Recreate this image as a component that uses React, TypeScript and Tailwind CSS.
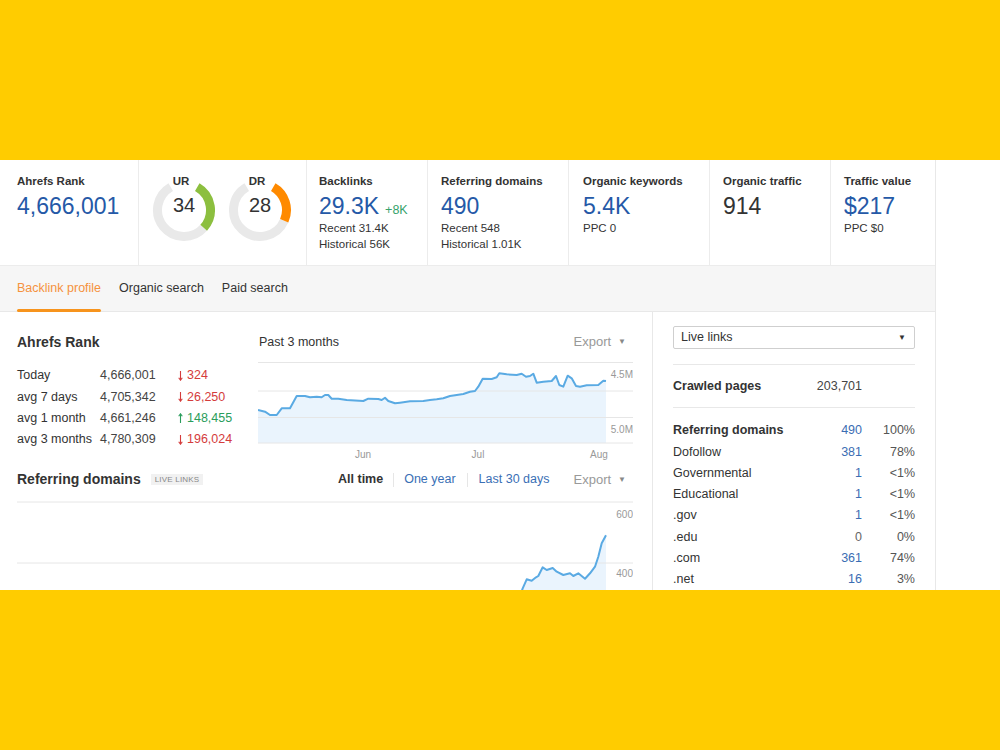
import React from "react";

const rankRows = [
  { label: "Today", value: "4,666,001", change: "324", up: false },
  { label: "avg 7 days", value: "4,705,342", change: "26,250", up: false },
  { label: "avg 1 month", value: "4,661,246", change: "148,455", up: true },
  { label: "avg 3 months", value: "4,780,309", change: "196,024", up: false },
];

const domainRows = [
  { label: "Referring domains", value: "490", pct: "100%", bold: true, link: true },
  { label: "Dofollow", value: "381", pct: "78%", link: true },
  { label: "Governmental", value: "1", pct: "<1%", link: true },
  { label: "Educational", value: "1", pct: "<1%", link: true },
  { label: ".gov", value: "1", pct: "<1%", link: true },
  { label: ".edu", value: "0", pct: "0%", link: false },
  { label: ".com", value: "361", pct: "74%", link: true },
  { label: ".net", value: "16", pct: "3%", link: true },
];

const rankLine = [
  [0, 48], [7, 49.7], [12, 53], [18.7, 53], [23.7, 46.3], [32, 46.3], [38.7, 34], [47, 34],
  [52, 35.3], [58.7, 34.7], [63.7, 35.3], [67, 33], [70.3, 33], [73.7, 36.7], [80.3, 36.7],
  [88.7, 38], [105.3, 39], [110.3, 36.7], [120.3, 37], [123.7, 38], [127, 35.7], [130.3, 39],
  [137, 41.3], [142, 40.7], [152, 39.3], [165.3, 39], [172, 38], [178.7, 37.3], [185.3, 36.3],
  [192, 34], [198.7, 33], [205.3, 32], [212, 29.7], [217, 29], [220.3, 24.7], [224.7, 16.7],
  [233.7, 17], [238.7, 15.3], [241.3, 11.3], [248.7, 12.3], [258.7, 13], [263.7, 11.7],
  [268, 14.7], [272, 14], [275.3, 11.7], [278.7, 20.7], [285.3, 19.7], [293.7, 19], [298, 14],
  [301.3, 23], [305.3, 24.7], [309.7, 13.7], [313.7, 16.3], [318, 24], [322, 24.7],
  [328.7, 23.3], [340.3, 23], [345.3, 18.7], [348, 19],
];

const domainLine = [
  [503, 106], [505.7, 98.3], [509.7, 89.3], [514.7, 90.7], [519, 87.3], [521.3, 86],
  [525.7, 77.3], [529.7, 80], [535.7, 78], [539.7, 81.7], [546.3, 85], [553, 83.3],
  [556.3, 86], [561.3, 83.3], [568, 88.7], [573, 83.3], [578, 76.7], [581.3, 66.7],
  [584.7, 53.3], [589, 45.3],
];

function pts(list: number[][]) {
  return list.map((p) => p.join(",")).join(" ");
}

function arc(r: number, a0: number, a1: number) {
  const p = (a: number) => {
    const t = (a * Math.PI) / 180;
    return [32 + r * Math.sin(t), 32 - r * Math.cos(t)];
  };
  const [x0, y0] = p(a0);
  const [x1, y1] = p(a1);
  const large = a1 - a0 > 180 ? 1 : 0;
  return `M${x0} ${y0} A${r} ${r} 0 ${large} 1 ${x1} ${y1}`;
}

function Gauge({ label, value, color }: { label: string; value: number; color: string }) {
  const end = 30 + (value / 100) * 300;
  return (
    <div className="relative w-[64px] h-[64px]">
      <svg width="64" height="64" viewBox="0 0 64 64">
        <path d={arc(26.5, end, 330)} stroke="#e9e9e9" strokeWidth="9" fill="none" />
        <path d={arc(26.5, 30, end)} stroke={color} strokeWidth="9" fill="none" />
      </svg>
      <div className="absolute left-0 right-[6px] top-[-4px] text-center text-[11.5px] font-bold leading-[14px] text-[#333]">
        {label}
      </div>
      <div className="absolute left-0 right-0 top-[17px] text-center text-[20px] leading-[20px] text-[#333]">
        {value}
      </div>
    </div>
  );
}

function Arrow({ up }: { up: boolean }) {
  return (
    <svg width="5" height="10" viewBox="0 0 5 10" className="mr-[4px]">
      {up ? (
        <path d="M2.5 1 L2.5 10 M0.7 3.3 L2.5 0.8 L4.3 3.3" stroke="#2a9d5c" strokeWidth="1.1" fill="none" />
      ) : (
        <path d="M2.5 0 L2.5 9 M0.7 6.7 L2.5 9.2 L4.3 6.7" stroke="#d43c3c" strokeWidth="1.1" fill="none" />
      )}
    </svg>
  );
}

function Metric({
  title,
  value,
  blue = true,
  extra,
  lines,
  className,
}: {
  title: string;
  value: string;
  blue?: boolean;
  extra?: string;
  lines?: string[];
  className: string;
}) {
  return (
    <div className={className}>
      <div className="text-[11.5px] font-bold leading-[14px] text-[#333]">{title}</div>
      <div className="mt-[4px] flex h-[28px] items-baseline leading-[28px]">
        <span className={"text-[23px] leading-[28px] " + (blue ? "text-[#2559a7]" : "text-[#333]")}>{value}</span>
        {extra && <span className="ml-[6px] text-[12.5px] leading-[28px] text-[#36a36b]">{extra}</span>}
      </div>
      {lines?.map((l) => (
        <div key={l} className="text-[11.5px] leading-[16px] text-[#333]">
          {l}
        </div>
      ))}
    </div>
  );
}

function Export({ className }: { className: string }) {
  return (
    <div className={"flex items-center text-[13px] text-[#999] " + className}>
      Export
      <span className="ml-[7px] text-[8px] text-[#888]">▼</span>
    </div>
  );
}

export default function App() {
  return (
    <div className="w-[1000px] h-[750px] bg-[#ffcc00] flex flex-col font-['Liberation_Sans',Arial,sans-serif] text-[#333]">
      <div className="h-[160px] shrink-0" />
      <div className="h-[430px] shrink-0 bg-white overflow-hidden">
        <div className="w-[936px] h-full border-r border-[#e8e8e8]">
          {/* metrics */}
          <div className="flex h-[106px] border-b border-[#ececec]">
            <Metric className="w-[139px] border-r border-[#ececec] pl-[17px] pt-[14px]" title="Ahrefs Rank" value="4,666,001" />
            <div className="w-[168px] border-r border-[#ececec] pl-[13px] pt-[18px] flex gap-[12px]">
              <Gauge label="UR" value={34} color="#8cbf3f" />
              <Gauge label="DR" value={28} color="#ff8a00" />
            </div>
            <Metric
              className="w-[121px] border-r border-[#ececec] pl-[12px] pt-[14px]"
              title="Backlinks"
              value="29.3K"
              extra="+8K"
              lines={["Recent 31.4K", "Historical 56K"]}
            />
            <Metric
              className="w-[141px] border-r border-[#ececec] pl-[13px] pt-[14px]"
              title="Referring domains"
              value="490"
              lines={["Recent 548", "Historical 1.01K"]}
            />
            <Metric
              className="w-[141px] border-r border-[#ececec] pl-[14px] pt-[14px]"
              title="Organic keywords"
              value="5.4K"
              lines={["PPC 0"]}
            />
            <Metric
              className="w-[121px] border-r border-[#ececec] pl-[13px] pt-[14px]"
              title="Organic traffic"
              value="914"
              blue={false}
            />
            <Metric className="flex-1 pl-[13px] pt-[14px]" title="Traffic value" value="$217" lines={["PPC $0"]} />
          </div>

          {/* tabs */}
          <div className="flex h-[46px] gap-[18px] px-[17px] bg-[#f6f6f6] border-b border-[#e8e8e8] text-[12.5px]">
            <div className="relative flex items-center text-[#f5923e]">
              Backlink profile
              <div className="absolute left-0 right-0 bottom-[-1px] h-[3px] rounded-full bg-[#f7941d]" />
            </div>
            <div className="flex items-center text-[#333]">Organic search</div>
            <div className="flex items-center text-[#333]">Paid search</div>
          </div>

          {/* content */}
          <div className="flex">
            <div className="w-[653px] shrink-0 border-r border-[#e8e8e8] px-[17px] pt-[20px]">
              <div className="flex">
                <div className="w-[241px]">
                  <div className="text-[14px] font-bold leading-[20px] text-[#333]">Ahrefs Rank</div>
                  <div className="mt-[13px] text-[12.5px]">
                    {rankRows.map((r) => (
                      <div key={r.label} className="flex items-center h-[21.3px]">
                        <div className="w-[83px] text-[#333]">{r.label}</div>
                        <div className="w-[78px] text-[#444]">{r.value}</div>
                        <div className={"flex items-center " + (r.up ? "text-[#2a9d5c]" : "text-[#d43c3c]")}>
                          <Arrow up={r.up} />
                          {r.change}
                        </div>
                      </div>
                    ))}
                  </div>
                </div>
                <div className="w-[375px]">
                  <div className="flex h-[20px] items-center justify-between">
                    <div className="pl-[1px] text-[12.5px] text-[#333]">Past 3 months</div>
                    <Export className="pr-[7px]" />
                  </div>
                  <svg width="375" height="100" className="mt-[10px] block">
                    <polygon points={`0,81 ${pts(rankLine)} 348,81`} fill="#eaf4fd" />
                    {[0.5, 29, 55.5, 81].map((y) => (
                      <line key={y} x1="0" x2="375" y1={y} y2={y} stroke="#e6e6e6" strokeWidth="1" />
                    ))}
                    <polyline points={pts(rankLine)} fill="none" stroke="#5aaae3" strokeWidth="2" strokeLinejoin="round" />
                    <text x="375" y="15.5" textAnchor="end" fontSize="10" fill="#999">4.5M</text>
                    <text x="375" y="70.5" textAnchor="end" fontSize="10" fill="#999">5.0M</text>
                    <text x="105" y="96" textAnchor="middle" fontSize="10" fill="#999">Jun</text>
                    <text x="220" y="96" textAnchor="middle" fontSize="10" fill="#999">Jul</text>
                    <text x="341" y="96" textAnchor="middle" fontSize="10" fill="#999">Aug</text>
                  </svg>
                </div>
              </div>

              <div className="mt-[7px] flex h-[21px] items-center justify-between">
                <div className="flex items-center">
                  <div className="text-[14px] font-bold text-[#333]">Referring domains</div>
                  <div className="ml-[10px] px-[4px] h-[11px] flex items-center bg-[#f1f1f1] text-[8px] text-[#888] tracking-[0.2px]">
                    LIVE LINKS
                  </div>
                </div>
                <div className="flex items-center text-[12.5px] pr-[9px]">
                  <span className="font-bold text-[#333]">All time</span>
                  <span className="mx-[10px] h-[14px] w-px bg-[#e6e6e6]" />
                  <span className="text-[#3a6fb5]">One year</span>
                  <span className="mx-[11px] h-[14px] w-px bg-[#e6e6e6]" />
                  <span className="text-[#3a6fb5]">Last 30 days</span>
                  <Export className="ml-[24px]" />
                </div>
              </div>
              <svg width="616" height="100" className="block">
                <polygon points={`503,110 ${pts(domainLine)} 589,110`} fill="#eaf4fd" />
                {[12, 73].map((y) => (
                  <line key={y} x1="0" x2="616" y1={y} y2={y} stroke="#e6e6e6" strokeWidth="1" />
                ))}
                <polyline points={pts(domainLine)} fill="none" stroke="#5aaae3" strokeWidth="2" strokeLinejoin="round" />
                <text x="616" y="27.5" textAnchor="end" fontSize="10" fill="#999">600</text>
                <text x="616" y="87" textAnchor="end" fontSize="10" fill="#999">400</text>
              </svg>
            </div>

            <div className="flex-1 px-[20px] pt-[14px] text-[12.5px]">
              <div className="flex h-[23px] items-center justify-between rounded-[2px] border border-[#cfcfcf] pl-[7px] pr-[8px]">
                <span className="text-[#333]">Live links</span>
                <span className="text-[8px] text-[#333]">▼</span>
              </div>
              <div className="mt-[15px] flex h-[44px] items-center border-y border-[#e8e8e8]">
                <div className="flex-1 font-bold text-[#333]">Crawled pages</div>
                <div className="text-right text-[#444]">203,701</div>
                <div className="w-[53px]" />
              </div>
              <div className="pt-[12px]">
                {domainRows.map((r) => (
                  <div key={r.label} className="flex items-center h-[21.3px]">
                    <div className={"flex-1 text-[#333] " + (r.bold ? "font-bold" : "")}>{r.label}</div>
                    <div className={"text-right " + (r.link ? "text-[#3b6db3]" : "text-[#666]")}>{r.value}</div>
                    <div className="w-[53px] text-right text-[#555]">{r.pct}</div>
                  </div>
                ))}
              </div>
            </div>
          </div>
        </div>
      </div>
      <div className="flex-1" />
    </div>
  );
}
